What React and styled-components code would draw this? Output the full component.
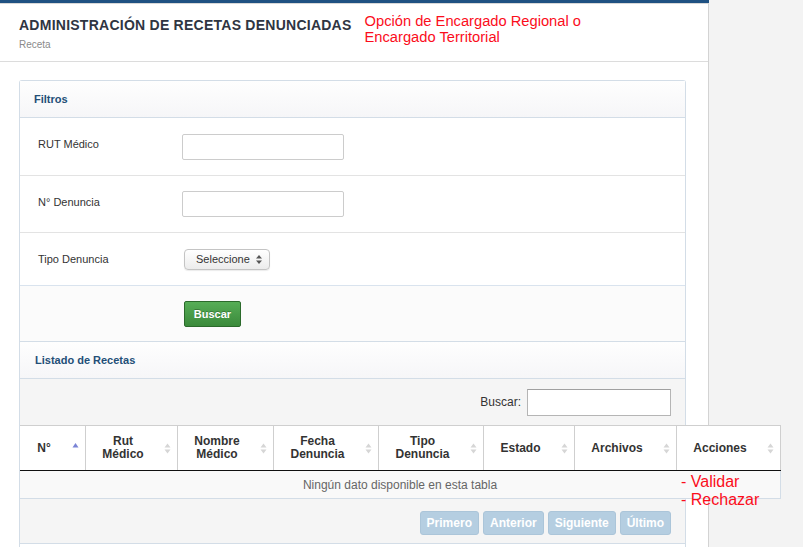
import React from "react";
import styled, { createGlobalStyle } from "styled-components";

const Global = createGlobalStyle`
  html, body { margin: 0; padding: 0; }
  body {
    font-family: "Liberation Sans", Arial, sans-serif;
    background: #ffffff;
    overflow: hidden;
  }
  * { box-sizing: border-box; }
`;

const Page = styled.div`
  display: flex;
  width: 803px;
  height: 547px;
  overflow: hidden;
`;

const Main = styled.div`
  width: 709px;
  flex: none;
  background: #fff;
  border-right: 1px solid #d3d3d3;
`;

const Side = styled.div`
  flex: 1;
  background: #f3f3f3;
`;

const TopBar = styled.div`
  height: 4px;
  background: #1f5182;
  border-bottom: 1px solid #d8d8d8;
  margin-right: -1px;
`;

const Header = styled.div`
  display: flex;
  align-items: flex-start;
  gap: 13px;
  height: 58px;
  padding: 13px 0 0 19px;
  border-bottom: 1px solid #dcdcdc;
`;

const TitleBlock = styled.div`
  display: flex;
  flex-direction: column;
  gap: 6px;
`;

const Title = styled.h1`
  margin: 0;
  font-size: 14px;
  line-height: 16px;
  font-weight: bold;
  letter-spacing: 0.25px;
  color: #2f3542;
  white-space: nowrap;
`;

const Crumb = styled.div`
  font-size: 10px;
  line-height: 12px;
  color: #8a8a8a;
`;

const Note = styled.div`
  margin-top: -4px;
  font-size: 14.7px;
  line-height: 16px;
  color: #fb0d1b;
`;

const Content = styled.div`
  padding: 18px 22px 0 19px;
`;

const Panel = styled.div`
  border: 1px solid #d3dde7;
  border-bottom: none;
  border-radius: 3px 3px 0 0;
  padding-bottom: 30px;
`;

const Heading = styled.div`
  height: ${(p) => (p.$first ? "37px" : "38px")};
  display: flex;
  align-items: center;
  padding-left: ${(p) => (p.$first ? "14px" : "15px")};
  font-size: 11px;
  font-weight: bold;
  color: #234f77;
  background: linear-gradient(#fefefe, #f6f6f8);
  border-top: ${(p) => (p.$first ? "none" : "1px solid #d3dde7")};
  border-bottom: 1px solid #d3dde7;
`;

const FormRow = styled.div`
  display: flex;
  align-items: center;
  height: ${(p) => p.$h}px;
  padding-left: 18px;
  border-bottom: 1px solid ${(p) => (p.$last ? "#d9e3ee" : "#e3e3e3")};
`;

const Label = styled.label`
  width: 144px;
  padding-bottom: ${(p) => (p.$raised ? "5px" : "0")};
  font-size: 11px;
  color: #333;
`;

const TextInput = styled.input`
  width: 162px;
  height: 26px;
  border: 1px solid #cccccc;
  border-radius: 2px;
  background: #fff;
  outline: none;
`;

const SelectBox = styled.div`
  display: flex;
  align-items: center;
  justify-content: space-between;
  margin-left: 2px;
  width: 86px;
  height: 21px;
  padding: 0 7px 0 11px;
  border: 1px solid #c4c4c4;
  border-radius: 4px;
  background: linear-gradient(#ffffff, #ececec);
  box-shadow: 0 1px 1px rgba(0, 0, 0, 0.08);
  font-size: 11px;
  color: #333;
`;

const FormFooter = styled.div`
  height: 55px;
  background: #fbfbfb;
  padding: 15px 0 0 164px;
`;

const GreenButton = styled.button`
  width: 57px;
  height: 26px;
  border: 1px solid #2b6a2b;
  border-radius: 2px;
  background: linear-gradient(#56ad56, #3b8a3b);
  color: #fff;
  font-family: "Liberation Sans", Arial, sans-serif;
  font-size: 11px;
  font-weight: bold;
  text-shadow: 0 -1px 0 rgba(0, 0, 0, 0.25);
  padding: 0;
`;

const Toolbar = styled.div`
  height: 46px;
  background: #f5f5f5;
  display: flex;
  align-items: center;
  justify-content: flex-end;
  gap: 6px;
  padding-right: 14px;
  font-size: 12px;
  color: #333;
`;

const SearchInput = styled.input`
  width: 144px;
  height: 27px;
  border: 1px solid #b5b5b5;
  border-top-color: #a0a0a0;
  background: #fff;
  outline: none;
`;

const TableArea = styled.div`
  position: relative;
  width: 761px;
`;

const COLS = "65px 92px 96px 105px 105px 91px 102px 105px";

const HeadRow = styled.div`
  display: grid;
  grid-template-columns: ${COLS};
  height: 46px;
  background: #fff;
  border-top: 1px solid #cfcfcf;
  border-bottom: 1px solid #111;
`;

const HeadCell = styled.div`
  display: grid;
  grid-template-columns: 1fr 7px;
  align-items: center;
  column-gap: 14px;
  padding: 0 6px 0 10px;
  border-left: ${(p) => (p.$first ? "none" : "1px solid #cfcfcf")};
  border-right: ${(p) => (p.$last ? "1px solid #cfcfcf" : "none")};
  font-size: 12px;
  line-height: 13px;
  font-weight: bold;
  color: #333;
  text-align: center;
`;

const EmptyRow = styled.div`
  height: 28px;
  display: flex;
  align-items: center;
  justify-content: center;
  background: #f9f9f9;
  border-bottom: 1px solid #d3dde7;
  border-right: 1px solid #d3dde7;
  font-size: 12px;
  color: #666;
`;

const ActionNote = styled.div`
  position: absolute;
  left: 661px;
  top: 48px;
  font-size: 16px;
  line-height: 18px;
  color: #fb0d1b;
  white-space: nowrap;
`;

const Pager = styled.div`
  height: 45px;
  background: #f5f5f5;
  border-bottom: 1px solid #d3dde7;
  display: flex;
  justify-content: flex-end;
  align-items: flex-start;
  gap: 4px;
  padding: 12px 14px 0 0;
`;

const PageButton = styled.button`
  height: 24px;
  padding: 0 6px;
  border: 1px solid #abc5d9;
  border-radius: 3px;
  background: #b5cee1;
  color: #fff;
  font-family: "Liberation Sans", Arial, sans-serif;
  font-size: 12px;
  font-weight: bold;
`;

const SortIcon = ({ active }) => (
  <svg width="7" height="11" viewBox="0 0 7 11">
    {active ? (
      <polygon points="0.5,4.5 3.5,0 6.5,4.5" fill="#7a84d6" />
    ) : (
      <>
        <polygon points="0.5,4.5 3.5,0.5 6.5,4.5" fill="#d6d6d6" />
        <polygon points="0.5,6.5 3.5,10.5 6.5,6.5" fill="#d6d6d6" />
      </>
    )}
  </svg>
);

const SelectArrows = () => (
  <svg width="6" height="9" viewBox="0 0 6 9">
    <polygon points="0,3.5 3,0 6,3.5" fill="#555" />
    <polygon points="0,5.5 3,9 6,5.5" fill="#555" />
  </svg>
);

const headers = [
  "N°",
  "Rut Médico",
  "Nombre Médico",
  "Fecha Denuncia",
  "Tipo Denuncia",
  "Estado",
  "Archivos",
  "Acciones",
];

export default function App() {
  return (
    <>
      <Global />
      <Page>
        <Main>
          <TopBar />
          <Header>
            <TitleBlock>
              <Title>ADMINISTRACIÓN DE RECETAS DENUNCIADAS</Title>
              <Crumb>Receta</Crumb>
            </TitleBlock>
            <Note>
              Opción de Encargado Regional o
              <br />
              Encargado Territorial
            </Note>
          </Header>
          <Content>
            <Panel>
              <Heading $first>Filtros</Heading>
              <FormRow $h={58}>
                <Label $raised>RUT Médico</Label>
                <TextInput />
              </FormRow>
              <FormRow $h={57}>
                <Label $raised>N° Denuncia</Label>
                <TextInput />
              </FormRow>
              <FormRow $h={53} $last>
                <Label>Tipo Denuncia</Label>
                <SelectBox>
                  <span>Seleccione</span>
                  <SelectArrows />
                </SelectBox>
              </FormRow>
              <FormFooter>
                <GreenButton>Buscar</GreenButton>
              </FormFooter>
              <Heading>Listado de Recetas</Heading>
              <Toolbar>
                <span>Buscar:</span>
                <SearchInput />
              </Toolbar>
              <TableArea>
                <HeadRow>
                  {headers.map((h, i) => (
                    <HeadCell key={h} $first={i === 0} $last={i === headers.length - 1}>
                      <span>{h}</span>
                      <SortIcon active={i === 0} />
                    </HeadCell>
                  ))}
                </HeadRow>
                <EmptyRow>Ningún dato disponible en esta tabla</EmptyRow>
                <ActionNote>
                  - Validar
                  <br />- Rechazar
                </ActionNote>
              </TableArea>
              <Pager>
                <PageButton>Primero</PageButton>
                <PageButton>Anterior</PageButton>
                <PageButton>Siguiente</PageButton>
                <PageButton>Último</PageButton>
              </Pager>
            </Panel>
          </Content>
        </Main>
        <Side />
      </Page>
    </>
  );
}
